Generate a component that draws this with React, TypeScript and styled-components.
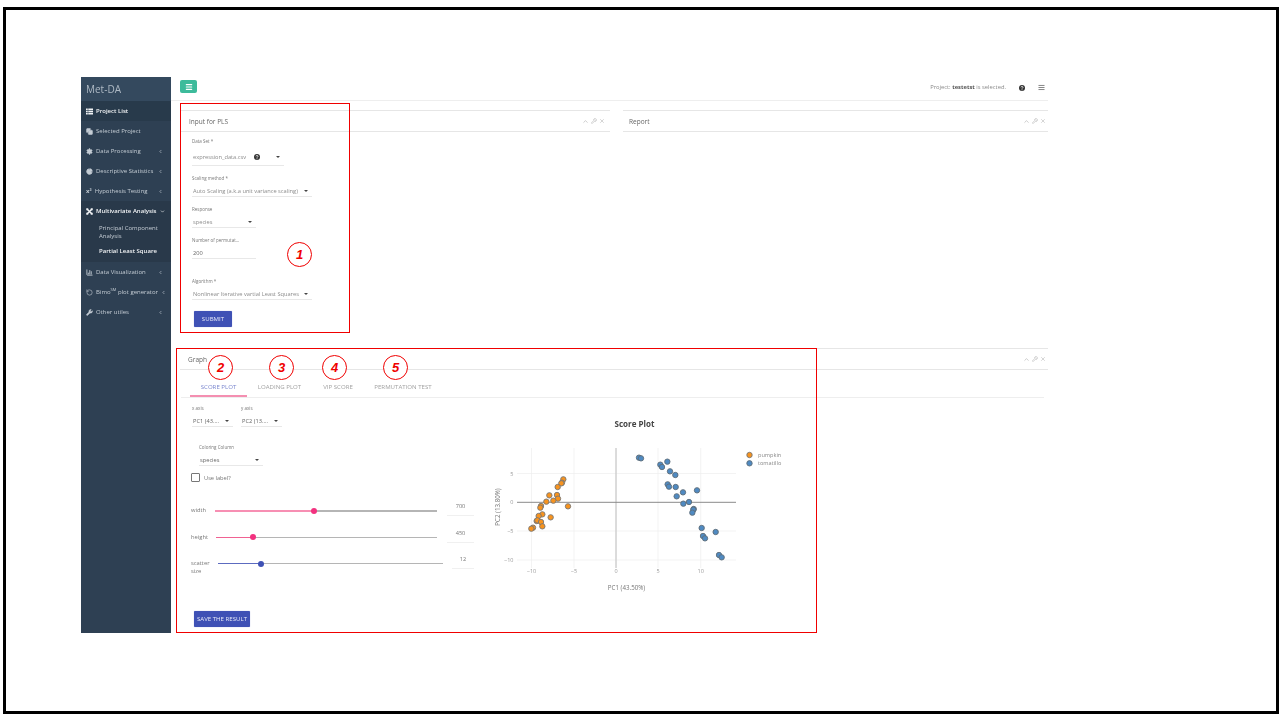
import React from "react";
import styled, { createGlobalStyle } from "styled-components";
import { Copy, Settings, PieChart, Wrench, BarChart3, ChevronLeft, ChevronDown, ChevronUp, X, AlignJustify, Menu, RotateCcw } from "lucide-react";

const Global = createGlobalStyle`
  html, body { margin: 0; padding: 0; background: #fff; }
  body { font-family: "Open Sans", "Liberation Sans", sans-serif; color: #666; }
`;

const Frame = styled.div`
  position: relative;
  box-sizing: border-box;
  width: 1276px;
  height: 707px;
  margin: 7px 0 0 3px;
  border: 3px solid #000;
  padding: 67px 228px 78px 75px;
  display: flex;
`;
const Sidebar = styled.aside`
  width: 90px;
  flex: none;
  background: #2e4053;
  color: #c4ccd4;
  font-size: 6px;
  display: flex;
  flex-direction: column;
  filter: blur(0.3px);
`;
const Brand = styled.div`
  height: 24px;
  line-height: 24px;
  padding-left: 5px;
  font-size: 10px;
  color: #aeb9c4;
  background: #34495e;
`;
const NavItem = styled.div<{ $active?: boolean; $open?: boolean }>`
  height: 20px;
  display: flex;
  align-items: center;
  gap: 3px;
  padding: 0 8px 0 5px;
  font-weight: ${(p) => (p.$active || p.$open ? 600 : 400)};
  color: ${(p) => (p.$active || p.$open ? "#f2f4f6" : "#c4ccd4")};
  background: ${(p) => (p.$active ? "#283a4b" : p.$open ? "#29394a" : "transparent")};
  white-space: nowrap;
  svg { flex: none; }
  span { flex: 1; }
  sup { font-size: 4px; line-height: 0; }
`;
const SubNav = styled.div`
  background: #29394a;
  padding: 3px 0 7px 18px;
  display: flex;
  flex-direction: column;
  gap: 7px;
`;
const SubItem = styled.div<{ $active?: boolean }>`
  line-height: 8px;
  font-size: 6px;
  width: 64px;
  font-weight: ${(p) => (p.$active ? 600 : 400)};
  color: ${(p) => (p.$active ? "#f2f4f6" : "#c4ccd4")};
`;
const Main = styled.main`
  flex: 1;
  min-width: 0;
  display: flex;
  flex-direction: column;
  padding-left: 9px;
  filter: blur(0.3px);
`;
const TopBar = styled.div`
  height: 24px;
  flex: none;
  margin-left: -9px;
  padding: 3px 3px 0 9px;
  box-sizing: border-box;
  border-bottom: 1px solid #eee;
  display: flex;
  align-items: flex-start;
`;
const MenuButton = styled.div`
  width: 17px;
  height: 13px;
  border-radius: 2px;
  background: #3dbb9b;
  color: #fff;
  display: flex;
  align-items: center;
  justify-content: center;
`;
const Status = styled.div`
  margin-left: auto;
  font-size: 5.8px;
  line-height: 15px;
  color: #8a8a8a;
  display: flex;
  align-items: center;
  b { color: #555; font-weight: 700; }
`;
const StatusIcons = styled.div`
  display: flex;
  gap: 13px;
  margin-left: 13px;
  align-items: center;
  color: #777;
`;
const TopRow = styled.div`
  display: flex;
  gap: 13px;
  margin-top: 9px;
  height: 238px;
  flex: none;
`;
const Panel = styled.section<{ $w?: number }>`
  box-sizing: border-box;
  border-top: 1px solid #e6e6e6;
  ${(p) => (p.$w ? `width: ${p.$w}px; flex: none;` : "flex: 1;")}
`;
const PanelHead = styled.div<{ $pl?: number; $pr?: number }>`
  height: 20px;
  border-bottom: 1px solid #e6e6e6;
  padding: 0 ${(p) => p.$pr ?? 2}px 0 ${(p) => p.$pl ?? 8}px;
  display: flex;
  align-items: center;
  justify-content: space-between;
  font-size: 6.5px;
  color: #666;
`;
const Tools = styled.div`
  display: flex;
  gap: 2px;
  color: #aaa;
`;
const Form = styled.div`
  padding: 6px 0 0 12px;
  display: flex;
  flex-direction: column;
`;
const FieldLabel = styled.div`
  font-size: 4.5px;
  line-height: 6px;
  color: #777;
`;
const Select = styled.div<{ $w: number; $dark?: boolean; $h?: number }>`
  width: ${(p) => p.$w}px;
  box-sizing: border-box;
  height: ${(p) => p.$h ?? 16}px;
  border-bottom: 1px solid #e8e8e8;
  display: flex;
  align-items: center;
  justify-content: space-between;
  padding: 5px 4px 0 1px;
  font-size: 5.7px;
  color: ${(p) => (p.$dark ? "#666" : "#8c8c8c")};
  white-space: nowrap;
`;
const Field = styled.div<{ $mt: number }>`
  margin-top: ${(p) => p.$mt}px;
`;
const Caret = styled.i`
  width: 0;
  height: 0;
  border: 2px solid transparent;
  border-top: 2.5px solid #444;
  border-bottom: 0;
  flex: none;
`;
const Primary = styled.div<{ $w: number }>`
  width: ${(p) => p.$w}px;
  height: 16px;
  line-height: 16px;
  text-align: center;
  border-radius: 1px;
  background: #3f51b5;
  color: #e6e9f8;
  font-size: 6.1px;
  box-shadow: 0 0 1px #8f99d8;
  white-space: nowrap;
`;
const SubmitWrap = styled.div`
  margin: 11px 0 0 2px;
`;
const GraphPanel = styled(Panel)`
  flex: 1;
  min-height: 0;
`;
const TabBar = styled.div`
  display: flex;
  margin: 0 4px 0 1px;
  height: 27px;
  border-bottom: 1px solid #eee;
  padding-left: 9px;
`;
const Tab = styled.div<{ $active?: boolean; $w: number }>`
  width: ${(p) => p.$w}px;
  flex: none;
  height: 27px;
  box-sizing: border-box;
  padding-top: 13px;
  text-align: center;
  font-size: 6.1px;
  line-height: 8px;
  white-space: nowrap;
  color: ${(p) => (p.$active ? "#7b87cf" : "#a2a2a2")};
  border-bottom: ${(p) => (p.$active ? "2px solid #f48fb1" : "none")};
`;
const GraphBody = styled.div`
  display: flex;
`;
const Controls = styled.div`
  width: 300px;
  flex: none;
  padding: 7px 0 0 12px;
  box-sizing: border-box;
`;
const AxisRow = styled.div`
  display: flex;
  gap: 8px;
`;
const ColoringField = styled.div`
  margin: 17px 0 0 7px;
`;
const CheckRow = styled.div`
  display: flex;
  align-items: center;
  gap: 4px;
  margin: 7px 0 0 -1px;
  font-size: 5.7px;
  color: #777;
`;
const CheckBox = styled.i`
  width: 9px;
  height: 9px;
  box-sizing: border-box;
  display: block;
  border: 1px solid #777;
  border-radius: 1px;
`;
const SliderRow = styled.div`
  display: flex;
  align-items: flex-start;
  height: 26.5px;
`;
const SliderLabel = styled.div<{ $w: number }>`
  width: ${(p) => p.$w}px;
  flex: none;
  margin-left: -1px;
  font-size: 5.8px;
  line-height: 8px;
  color: #777;
`;
const Track = styled.div<{ $w: number; $thick?: boolean }>`
  position: relative;
  width: ${(p) => p.$w}px;
  height: ${(p) => (p.$thick ? 1.5 : 1)}px;
  margin-top: 4px;
  margin-left: 1px;
  flex: none;
  background: #b5b5b5;
`;
const Fill = styled.div<{ $c: string }>`
  position: absolute;
  left: 0;
  top: 0;
  bottom: 0;
  background: ${(p) => p.$c};
`;
const Knob = styled.div<{ $c: string }>`
  position: absolute;
  top: -2.5px;
  width: 6px;
  height: 6px;
  margin-left: -3px;
  border-radius: 50%;
  background: ${(p) => p.$c};
`;
const NumBox = styled.div<{ $w: number; $ml: number }>`
  width: ${(p) => p.$w}px;
  margin-left: ${(p) => p.$ml}px;
  height: 13px;
  margin-top: -4px;
  flex: none;
  border-bottom: 1px solid #f0f0f0;
  text-align: center;
  font-size: 5.6px;
  line-height: 8px;
  color: #777;
`;
const Sliders = styled.div`
  margin-top: 24px;
`;
const SaveWrap = styled.div`
  margin: 25px 0 0 2px;
`;
const Plot = styled.svg`
  display: block;
  flex: none;
  margin-top: 13px;
`;
const HelpSvg = styled.svg<{ $mr?: number }>`
  display: block;
  flex: none;
  margin-right: ${(p) => p.$mr ?? 0}px;
`;
const Highlight = styled.div<{ $x: number; $y: number; $w: number; $h: number }>`
  position: absolute;
  left: ${(p) => p.$x}px;
  top: ${(p) => p.$y}px;
  width: ${(p) => p.$w}px;
  height: ${(p) => p.$h}px;
  box-sizing: border-box;
  border: 1px solid #f00000;
  pointer-events: none;
`;
const Callout = styled.div<{ $x: number; $y: number }>`
  position: absolute;
  left: ${(p) => p.$x}px;
  top: ${(p) => p.$y}px;
  width: 25px;
  height: 25px;
  box-sizing: border-box;
  border: 1px solid #f00000;
  border-radius: 50%;
  background: #fff;
  color: #f00000;
  font: italic 700 13px/23px "Liberation Sans", sans-serif;
  text-align: center;
`;

const orange: [number, number][] = [
  [220,208],[216,218],[214,220],[203,231],[201,255],[178,256],[204,266],[190,272],[169,275],[234,289],
  [153,288],[151,293],[157,313],[146,318],[182,322],[140,333],[142,331],[153,336],[157,349],[129,353],[124,356],
];
const blue: [number, number][] = [
  [27,53],[33,55],[112,65],[91,74],[96,81],[120,94],[136,105],[113,133],[117,140],[137,141],[159,157],
  [201,151],[140,169],[177,186],[160,191],[191,207],[190,209],[187,218],[215,264],[257,276],[219,288],
  [225,295],[267,345],[275,352],
];

// plot svg sits with its origin at page (480, 411)
const OX = 480;
const OY = 411;
const px = (x: number) => x - OX;
const py = (y: number) => y - OY;
const xTicks: [string, number][] = [["−10", 531.5], ["−5", 574], ["0", 616], ["5", 658], ["10", 700.7]];
const yTicks: [string, number][] = [["5", 473.5], ["−5", 531], ["−10", 560]];

const ScorePlot = () => (
  <Plot width="330" height="190" viewBox="0 0 330 190">
    <g fontFamily="'Open Sans', sans-serif">
      <text x={px(634.5)} y={py(427)} textAnchor="middle" fontSize="8" fontWeight="700" fill="#444">Score Plot</text>
      {xTicks.map(([, x]) => <line key={x} x1={px(x)} x2={px(x)} y1={py(448)} y2={py(568)} stroke="#eeeeee" strokeWidth="0.7" />)}
      {yTicks.map(([, y]) => <line key={y} x1={px(517)} x2={px(736)} y1={py(y)} y2={py(y)} stroke="#eeeeee" strokeWidth="0.7" />)}
      <line x1={px(616)} x2={px(616)} y1={py(448)} y2={py(568)} stroke="#c8c8c8" strokeWidth="1.2" />
      <line x1={px(517)} x2={px(736)} y1={py(502.3)} y2={py(502.3)} stroke="#8a8a8a" strokeWidth="1" />
      {xTicks.map(([t, x]) => <text key={t} x={px(x)} y={py(572.5)} textAnchor="middle" fontSize="5.5" fill="#999">{t}</text>)}
      {[...yTicks, ["0", 502.3] as [string, number]].map(([t, y]) => <text key={t} x={px(513.5)} y={py(y + 2)} textAnchor="end" fontSize="5.5" fill="#999">{t}</text>)}
      <text x={px(626.5)} y={py(590)} textAnchor="middle" fontSize="6.2" fill="#777">PC1 (43.50%)</text>
      <text transform={`translate(${px(499.5)} ${py(507)}) rotate(-90)`} x="0" y="0" textAnchor="middle" fontSize="6.2" fill="#777">PC2 (13.80%)</text>
      {orange.map(([x, y], i) => (
        <circle key={i} cx={px(490 + x / 3)} cy={py(410 + y / 3)} r="2.7" fill="#f7931e" stroke="#777" strokeWidth="0.9" />
      ))}
      {blue.map(([x, y], i) => (
        <circle key={i} cx={px(630 + x / 3)} cy={py(440 + y / 3)} r="2.7" fill="#4f8ac2" stroke="#5f6d78" strokeWidth="0.9" />
      ))}
      <circle cx={px(749.5)} cy={py(455)} r="2.7" fill="#f7931e" stroke="#777" strokeWidth="0.9" />
      <circle cx={px(749.5)} cy={py(463.3)} r="2.7" fill="#4f8ac2" stroke="#5f6d78" strokeWidth="0.9" />
      <text x={px(758)} y={py(457)} fontSize="5.6" fill="#888">pumpkin</text>
      <text x={px(758)} y={py(465.3)} fontSize="5.6" fill="#888">tomatillo</text>
    </g>
  </Plot>
);

const PanelTools = () => (
  <Tools>
    <ChevronUp size={7} />
    <Wrench size={6} />
    <X size={6} />
  </Tools>
);

const HelpDot = ({ mr }: { mr?: number }) => (
  <HelpSvg $mr={mr} width="6" height="6" viewBox="0 0 12 12">
    <circle cx="6" cy="6" r="6" fill="#333" />
    <path d="M4 4.6C4 2.4 8 2.4 8 4.6C8 6 6 6 6 7.4" fill="none" stroke="#fff" strokeWidth="1.6" />
    <circle cx="6" cy="9.4" r="1" fill="#fff" />
  </HelpSvg>
);

const ThList = () => (
  <svg width="7" height="7" viewBox="0 0 14 14" fill="currentColor">
    <rect x="0" y="1" width="3.5" height="3.2" />
    <rect x="4.5" y="1" width="9.5" height="3.2" />
    <rect x="0" y="5.4" width="3.5" height="3.2" />
    <rect x="4.5" y="5.4" width="9.5" height="3.2" />
    <rect x="0" y="9.8" width="3.5" height="3.2" />
    <rect x="4.5" y="9.8" width="9.5" height="3.2" />
  </svg>
);

const Cubes = () => (
  <svg width="7" height="7" viewBox="0 0 14 14" fill="currentColor">
    <path d="M3 3L11 11M11 3L3 11" stroke="currentColor" strokeWidth="3" />
    <rect x="0.5" y="0.5" width="4" height="4" />
    <rect x="9.5" y="0.5" width="4" height="4" />
    <rect x="0.5" y="9.5" width="4" height="4" />
    <rect x="9.5" y="9.5" width="4" height="4" />
  </svg>
);

const Chevron = () => <ChevronLeft size={5} strokeWidth={3} />;

export default function App() {
  return (
    <>
      <Global />
      <Frame>
        <Sidebar>
          <Brand>Met-DA</Brand>
          <NavItem $active><ThList /><span>Project List</span></NavItem>
          <NavItem><Copy size={7} strokeWidth={2} fill="currentColor" /><span>Selected Project</span></NavItem>
          <NavItem><Settings size={7} strokeWidth={2} fill="currentColor" /><span>Data Processing</span><Chevron /></NavItem>
          <NavItem><PieChart size={7} strokeWidth={2} fill="currentColor" /><span>Descriptive Statistics</span><Chevron /></NavItem>
          <NavItem><b>x²</b><span>Hypothesis Testing</span><Chevron /></NavItem>
          <NavItem $open><Cubes /><span>Multivariate Analysis</span><ChevronDown size={5} strokeWidth={3} /></NavItem>
          <SubNav>
            <SubItem>Principal Component Analysis</SubItem>
            <SubItem $active>Partial Least Square</SubItem>
          </SubNav>
          <NavItem><BarChart3 size={7} strokeWidth={3} /><span>Data Visualization</span><Chevron /></NavItem>
          <NavItem><RotateCcw size={7} strokeWidth={2} /><span>Bimo<sup>SM</sup> plot generator</span><Chevron /></NavItem>
          <NavItem><Wrench size={7} strokeWidth={2} fill="currentColor" /><span>Other utiles</span><Chevron /></NavItem>
        </Sidebar>
        <Main>
          <TopBar>
            <MenuButton><Menu size={8} strokeWidth={3.5} /></MenuButton>
            <Status>
              <span>Project: <b>testetst</b> is selected.</span>
              <StatusIcons>
                <HelpDot />
                <AlignJustify size={7} strokeWidth={3} />
              </StatusIcons>
            </Status>
          </TopBar>
          <TopRow>
            <Panel $w={430}>
              <PanelHead $pl={9} $pr={5}>Input for PLS<PanelTools /></PanelHead>
              <Form>
                <Field $mt={0}>
                  <FieldLabel>Data Set *</FieldLabel>
                  <Select $w={92} $h={22}>expression_data.csv <HelpDot mr={8} /> <Caret /></Select>
                </Field>
                <Field $mt={9}>
                  <FieldLabel>Scaling method *</FieldLabel>
                  <Select $w={120}>Auto Scaling (a.k.a unit variance scaling) <Caret /></Select>
                </Field>
                <Field $mt={9}>
                  <FieldLabel>Response</FieldLabel>
                  <Select $w={64}>species <Caret /></Select>
                </Field>
                <Field $mt={9}>
                  <FieldLabel>Number of permutat...</FieldLabel>
                  <Select $w={64} $dark>200</Select>
                </Field>
                <Field $mt={19}>
                  <FieldLabel>Algorithm *</FieldLabel>
                  <Select $w={120}>Nonlinear Iterative vartial Least Squares <Caret /></Select>
                </Field>
                <SubmitWrap><Primary $w={38}>SUBMIT</Primary></SubmitWrap>
              </Form>
            </Panel>
            <Panel>
              <PanelHead $pl={6}>Report<PanelTools /></PanelHead>
            </Panel>
          </TopRow>
          <GraphPanel>
            <PanelHead>Graph<PanelTools /></PanelHead>
            <TabBar>
              <Tab $w={57} $active>SCORE PLOT</Tab>
              <Tab $w={65}>LOADING PLOT</Tab>
              <Tab $w={52}>VIP SCORE</Tab>
              <Tab $w={78}>PERMUTATION TEST</Tab>
            </TabBar>
            <GraphBody>
              <Controls>
                <AxisRow>
                  <div><FieldLabel>x axis</FieldLabel><Select $w={41} $dark>PC1 (43.... <Caret /></Select></div>
                  <div><FieldLabel>y axis</FieldLabel><Select $w={41} $dark>PC2 (13.... <Caret /></Select></div>
                </AxisRow>
                <ColoringField>
                  <FieldLabel>Coloring Column</FieldLabel>
                  <Select $w={64} $dark>species <Caret /></Select>
                </ColoringField>
                <CheckRow><CheckBox />Use label?</CheckRow>
                <Sliders>
                  <SliderRow>
                    <SliderLabel $w={23}>width</SliderLabel>
                    <Track $w={222} $thick>
                      <Fill $c="#f78fb3" style={{ width: "44.4%" }} />
                      <Knob $c="#f2317f" style={{ left: "44.4%" }} />
                    </Track>
                    <NumBox $w={27} $ml={10}>700</NumBox>
                  </SliderRow>
                  <SliderRow>
                    <SliderLabel $w={24}>height</SliderLabel>
                    <Track $w={221}>
                      <Fill $c="#f06292" style={{ width: "16.9%" }} />
                      <Knob $c="#f2317f" style={{ left: "16.9%" }} />
                    </Track>
                    <NumBox $w={27} $ml={10}>450</NumBox>
                  </SliderRow>
                  <SliderRow>
                    <SliderLabel $w={26}>scatter size</SliderLabel>
                    <Track $w={225}>
                      <Fill $c="#5c6bc0" style={{ width: "19.1%" }} />
                      <Knob $c="#3f51b5" style={{ left: "19.1%" }} />
                    </Track>
                    <NumBox $w={22} $ml={9}>12</NumBox>
                  </SliderRow>
                </Sliders>
                <SaveWrap><Primary $w={56}>SAVE THE RESULT</Primary></SaveWrap>
              </Controls>
              <ScorePlot />
            </GraphBody>
          </GraphPanel>
        </Main>
        <Highlight $x={174} $y={93} $w={170} $h={230} />
        <Highlight $x={170} $y={338} $w={641} $h={285} />
        <Callout $x={281} $y={232}>1</Callout>
        <Callout $x={202} $y={345}>2</Callout>
        <Callout $x={263} $y={345}>3</Callout>
        <Callout $x={316} $y={345}>4</Callout>
        <Callout $x={377} $y={345}>5</Callout>
      </Frame>
    </>
  );
}
